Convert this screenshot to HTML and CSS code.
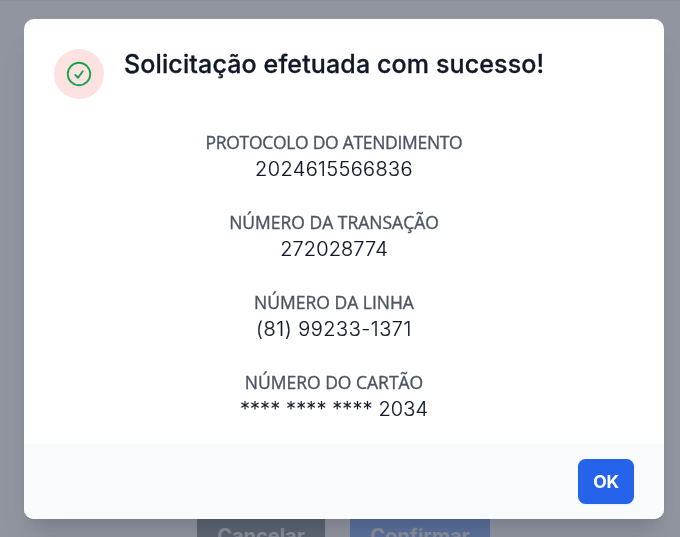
FILE: index.html
```
<!DOCTYPE html>
<html lang="pt-BR">
<head>
    <meta charset="UTF-8">
    <meta name="viewport" content="width=device-width, initial-scale=1.0">
    <title>Solicitação</title>
    <link rel="stylesheet" href="styles.css">
</head>
<body>
    <main class="page">
        <div class="page-actions">
            <button class="btn-cancel">Cancelar</button>
            <button class="btn-confirm">Confirmar</button>
        </div>
    </main>

    <div class="overlay">
        <div class="modal" role="dialog" aria-modal="true" aria-labelledby="modal-title">
            <div class="modal-body">
                <div class="modal-header">
                    <div class="modal-icon">
                        <svg viewBox="0 0 24 24" fill="none" stroke="currentColor" stroke-width="1.5" stroke-linecap="round" stroke-linejoin="round">
                            <path d="M9 12.75 11.25 15 15 9.75M21 12a9 9 0 1 1-18 0 9 9 0 0 1 18 0Z"/>
                        </svg>
                    </div>
                    <h3 id="modal-title">Solicitação efetuada com sucesso!</h3>
                </div>
                <dl class="details">
                    <div class="detail protocol">
                        <dt>PROTOCOLO DO ATENDIMENTO</dt>
                        <dd>2024615566836</dd>
                    </div>
                    <div class="detail">
                        <dt>NÚMERO DA TRANSAÇÃO</dt>
                        <dd>272028774</dd>
                    </div>
                    <div class="detail phone">
                        <dt>NÚMERO DA LINHA</dt>
                        <dd>(81) 99233-1371</dd>
                    </div>
                    <div class="detail">
                        <dt>NÚMERO DO CARTÃO</dt>
                        <dd>**** **** **** 2034</dd>
                    </div>
                </dl>
            </div>
            <div class="modal-footer">
                <button class="btn-ok">OK</button>
            </div>
        </div>
    </div>
</body>
</html>
```
FILE: styles.css
```
* {
    box-sizing: border-box;
}

body {
    margin: 0;
    font-family: Inter, sans-serif;
    background-color: #fff;
    color: #111827;
    height: 100vh;
    overflow: hidden;
}

h3, dl, dt, dd {
    margin: 0;
}

button {
    border: none;
    font-family: inherit;
    cursor: pointer;
}

/* Page behind the modal */
.page {
    padding-top: 510px;
    border-top: 1px solid #e5e7eb;
}

.page-actions {
    display: flex;
    justify-content: center;
    gap: 25px;
    padding-left: 7px;
}

.page-actions button {
    height: 50px;
    color: #e5e7eb;
    font-size: 20px;
    font-weight: 700;
    padding: 0;
}

.btn-cancel {
    width: 128px;
    background-color: #374151;
}

.btn-confirm {
    width: 140px;
    background-color: #2f72f0;
}

/* Modal */
.overlay {
    position: fixed;
    inset: 0;
    padding: 19px 16px 18px 24px;
    background-color: rgba(107, 114, 128, 0.75);
}

.modal {
    display: flex;
    flex-direction: column;
    height: 500px;
    background-color: #fff;
    border-radius: 10px;
    overflow: hidden;
    box-shadow: 0 25px 31px -6px rgba(0, 0, 0, 0.1), 0 10px 12px -7px rgba(0, 0, 0, 0.1);
}

.modal-body {
    flex: 1;
    padding: 30px 30px 0;
}

.modal-header {
    display: flex;
    gap: 20px;
}

.modal-icon {
    display: flex;
    align-items: center;
    justify-content: center;
    width: 50px;
    height: 50px;
    border-radius: 50%;
    background-color: #fee2e2;
    color: #16a34a;
}

.modal-icon svg {
    width: 30px;
    height: 30px;
}

.modal-header h3 {
    font-size: 25px;
    font-weight: 500;
    line-height: 30px;
    letter-spacing: 0.13px;
    -webkit-text-stroke: 0.3px #111827;
}

.details {
    display: flex;
    flex-direction: column;
    gap: 25px;
    padding: 30px 20px 0 0;
    text-align: center;
}

.detail dt {
    font-family: "Open Sans", sans-serif;
    font-size: 17.5px;
    line-height: 27px;
    color: #4b5563;
    -webkit-text-stroke: 0.35px #4b5563;
}

.detail dd {
    margin-top: -1px;
    font-size: 20px;
    font-weight: 300;
    line-height: 29px;
    letter-spacing: 0.1px;
    -webkit-text-stroke: 0.15px #111827;
}

.protocol dt {
    letter-spacing: -0.3px;
}

.protocol dd {
    letter-spacing: 0.35px;
}

.phone dd {
    letter-spacing: 0.5px;
}

.modal-footer {
    display: flex;
    justify-content: flex-end;
    padding: 15px 30px;
    background-color: #f9fafb;
}

.btn-ok {
    width: 56px;
    height: 45px;
    padding: 0;
    border-radius: 7.5px;
    background-color: #2563eb;
    color: #fff;
    font-size: 17.5px;
    font-weight: 700;
    letter-spacing: -0.3px;
    box-shadow: 0 1px 2px rgba(0, 0, 0, 0.05);
}
```
